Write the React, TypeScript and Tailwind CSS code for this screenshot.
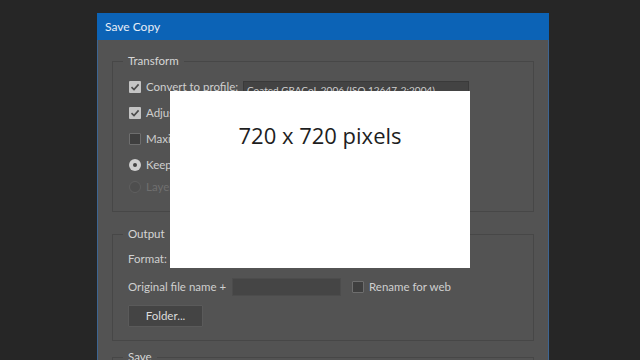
import React from "react";

const font = { fontFamily: 'Lato, "Noto Sans", sans-serif' };

function Check({ checked }: { checked?: boolean }) {
  if (checked) {
    return (
      <span className="w-[12px] h-[12px] bg-[#c4c4c4] rounded-[1px] flex items-center justify-center shrink-0">
        <svg width="10" height="10" viewBox="0 0 10 10">
          <path d="M1.5 5.2 L4 7.6 L8.6 2.4" fill="none" stroke="#4a4a4a" strokeWidth="1.6" />
        </svg>
      </span>
    );
  }
  return <span className="block w-[12px] h-[12px] bg-[#3f3f3f] border border-[#6e6e6e] rounded-[1px] shrink-0" />;
}

function Radio({ checked, disabled }: { checked?: boolean; disabled?: boolean }) {
  if (checked) {
    return (
      <span className="w-[12px] h-[12px] rounded-full bg-[#cfcfcf] flex items-center justify-center shrink-0">
        <span className="w-[4px] h-[4px] rounded-full bg-[#444]" />
      </span>
    );
  }
  return (
    <span
      className={
        disabled
          ? "block w-[12px] h-[12px] rounded-full border border-[#5f5f5f] bg-[#4e4e4e] shrink-0"
          : "block w-[12px] h-[12px] rounded-full border border-[#6e6e6e] bg-[#3f3f3f] shrink-0"
      }
    />
  );
}

export default function App() {
  return (
    <div className="w-[640px] h-[360px] bg-[#262626] overflow-hidden relative" style={font}>
      <div className="ml-[97px] pt-[13px] w-[452px]">
        {/* Title bar */}
        <div className="h-[27px] bg-[#0c63b6] flex items-center pl-[8px] text-[12px] text-[#e8eef6]">
          Save Copy
        </div>

        {/* Body */}
        <div className="bg-[#535353] border-x border-[#3d6592] px-[14px] pt-[13px] pb-[20px] text-[11.5px] text-[#cfcfcf] whitespace-nowrap">
          {/* Transform */}
          <fieldset className="border border-[#474747] pl-[16px] pr-[10px] pt-[5px] pb-[15px]">
            <legend className="-ml-[6px] px-[5px] h-[16px] leading-[16px] text-[#d6d6d6]">Transform</legend>
            <div className="h-[26px] flex items-center gap-[5px]">
              <Check checked />
              <span className="w-[92px]">Convert to profile:</span>
              <div className="mt-[6px] w-[226px] h-[19px] bg-[#434343] border border-[#3a3a3a] flex items-center px-[3px] text-[10px] text-[#cfcfcf] overflow-hidden">
                Coated GRACoL 2006 (ISO 12647-2:2004)
              </div>
            </div>
            <div className="h-[26px] flex items-center gap-[5px]">
              <Check checked />
              <span>Adjust to fit Photoshop conversion</span>
            </div>
            <div className="h-[26px] flex items-center gap-[5px]">
              <Check />
              <span>Maximum size</span>
            </div>
            <div className="h-[26px] flex items-center gap-[5px]">
              <Radio checked />
              <span>Keep layers</span>
            </div>
            <div className="h-[18px] flex items-center gap-[5px] text-[#6f6f6f]">
              <Radio disabled />
              <span>Layers</span>
            </div>
          </fieldset>

          {/* Output */}
          <fieldset className="mt-[14px] border border-[#474747] pl-[15px] pr-[10px] pt-[6px] pb-[13px]">
            <legend className="-ml-[5px] px-[5px] h-[16px] leading-[16px] text-[#d6d6d6]">Output</legend>
            <div className="h-[22px] flex items-center">Format:</div>
            <div className="mt-[3px] h-[28px] flex items-center">
              <span className="w-[104px]">Original file name +</span>
              <div className="w-[109px] h-[18px] bg-[#454545] border border-[#4c4c4c]" />
              <span className="ml-[11px] mr-[5px] flex">
                <Check />
              </span>
              <span>Rename for web</span>
            </div>
            <div className="mt-[4px] w-[75px] h-[22px] bg-[#444444] border border-[#5a5a5a] rounded-[1px] flex items-center justify-center text-[#dcdcdc]">
              Folder...
            </div>
          </fieldset>

          {/* Next section (cut off at the window edge) */}
          <fieldset className="mt-[8px] border border-[#474747] pl-[15px] h-[40px]">
            <legend className="-ml-[5px] px-[5px] h-[16px] leading-[16px] text-[#d6d6d6]">Save</legend>
          </fieldset>
        </div>
      </div>

      {/* White overlay */}
      <div className="absolute left-[170px] top-[91px] w-[300px] h-[177px] bg-white flex justify-center">
        <span
          className="mt-[30px] text-[22px] text-[#1e1e1e] leading-[28px]"
          style={{ fontFamily: '"Open Sans", "Noto Sans", sans-serif' }}
        >
          720 x 720 pixels
        </span>
      </div>
    </div>
  );
}
